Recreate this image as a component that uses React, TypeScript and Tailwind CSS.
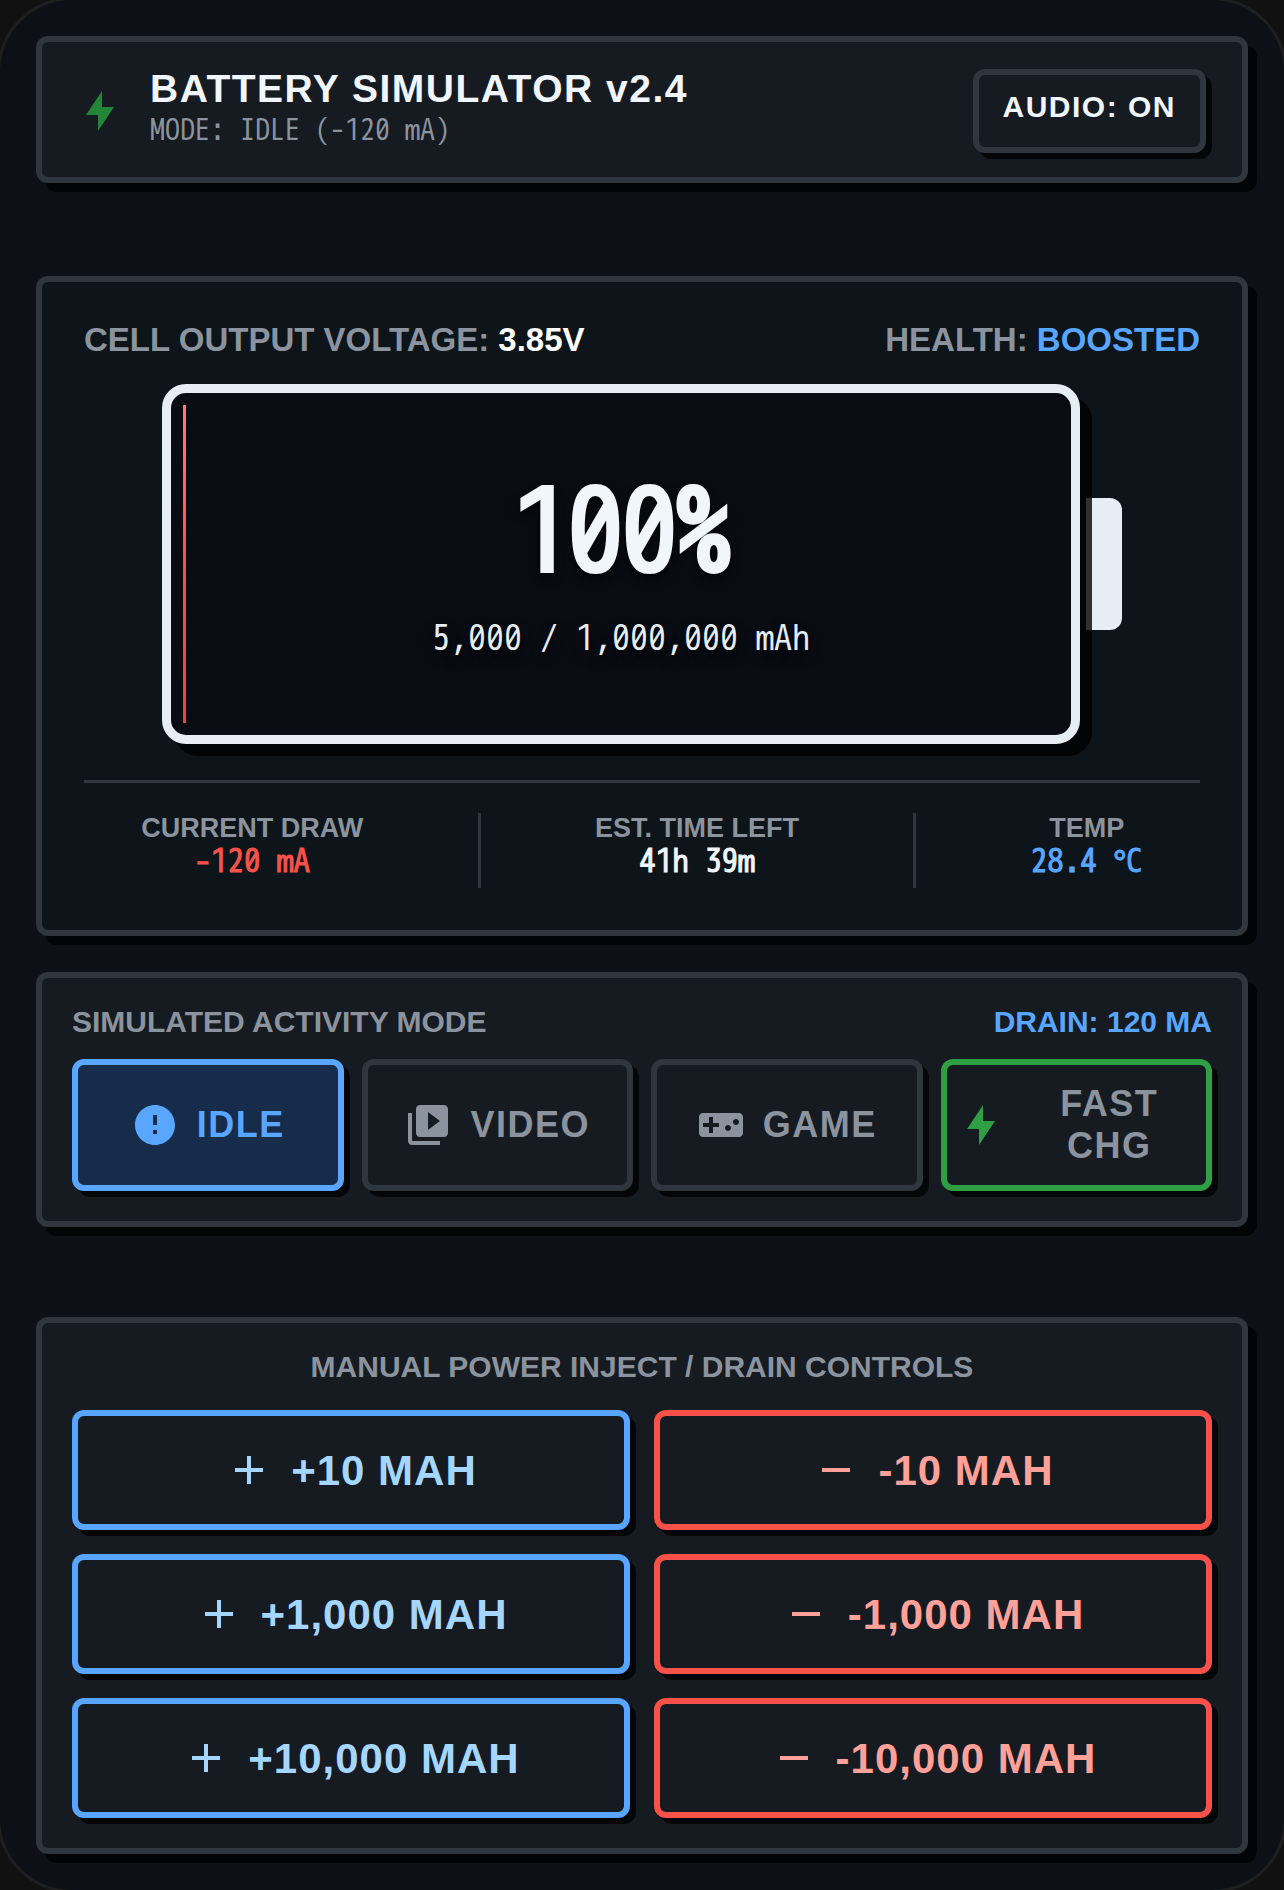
import { useState, type ReactNode } from "react";

const MONO = "font-['WenQuanYi_Zen_Hei_Mono',Inconsolata,'Liberation_Mono',monospace]";
const CARD = "rounded-xl border-6 border-[#30363d] shadow-[9px_9px_0_rgba(0,0,0,0.75)]";
const BUTTON =
  "flex cursor-pointer items-center justify-center gap-[18px] rounded-xl border-6 font-bold shadow-[6px_6px_0_rgba(0,0,0,0.75)]";

function Icon({ d, className = "" }: { d: string; className?: string }) {
  return (
    <svg viewBox="0 0 24 24" aria-hidden="true" className={`size-12 shrink-0 fill-current ${className}`}>
      <path fillRule="evenodd" d={d} />
    </svg>
  );
}

const BOLT = "M13 2v8h6l-8 12v-8H5z";
const ALERT =
  "M12 2C6.48 2 2 6.48 2 12s4.48 10 10 10 10-4.48 10-10S17.52 2 12 2zm1 14.5h-2v-2h2v2zm0-4.5h-2V7h2v5z";
const VIDEO =
  "M4 6H2v14c0 1.1.9 2 2 2h14v-2H4V6zm16-4H8c-1.1 0-2 .9-2 2v12c0 1.1.9 2 2 2h12c1.1 0 2-.9 2-2V4c0-1.1-.9-2-2-2zm-8 12.5v-9l6 4.5-6 4.5z";
const GAME =
  "M21 6H3c-1.1 0-2 .9-2 2v8c0 1.1.9 2 2 2h18c1.1 0 2-.9 2-2V8c0-1.1-.9-2-2-2zm-10 7H8v3H6v-3H3v-2h3V8h2v3h3v2zm4.5 2c-.83 0-1.5-.67-1.5-1.5s.67-1.5 1.5-1.5 1.5.67 1.5 1.5-.67 1.5-1.5 1.5zm4-3c-.83 0-1.5-.67-1.5-1.5S18.67 9 19.5 9s1.5.67 1.5 1.5-.67 1.5-1.5 1.5z";
const PLUS = "M19 13h-6v6h-2v-6H5v-2h6V5h2v6h6v2z";
const MINUS = "M19 13H5v-2h14v2z";

const modes = [
  { id: "idle", label: "IDLE", icon: ALERT },
  { id: "video", label: "VIDEO", icon: VIDEO },
  { id: "game", label: "GAME", icon: GAME },
  { id: "fast", label: "FAST CHG", icon: BOLT },
];

const amounts = ["10", "1,000", "10,000"];

function modeColors(id: string, active: boolean) {
  if (active) return "border-[#58a6ff] bg-[#172b4a] text-[#58a6ff]";
  if (id === "fast") return "border-[#2ea043] bg-[#161b22] text-[#8b949e]";
  return "border-[#30363d] bg-[#161b22] text-[#8b949e]";
}

function Stat({ label, color, children }: { label: string; color: string; children: ReactNode }) {
  return (
    <div className="flex flex-col items-center">
      <span className="text-[27px] leading-[30px] font-bold text-[#8b949e]">{label}</span>
      <span
        className={`text-[33px] leading-[39px] font-bold whitespace-pre [-webkit-text-stroke:1px_currentColor] ${MONO} ${color}`}
      >
        {children}
      </span>
    </div>
  );
}

export default function App() {
  const [audio, setAudio] = useState(true);
  const [mode, setMode] = useState("idle");

  return (
    <div className="bg-[#111111] font-['Liberation_Sans',Arial,sans-serif]">
      <main className="flex min-h-screen flex-col rounded-[72px] bg-[#0d1017] p-9 shadow-[0_0_0_3px_#1f1f1f]">
        <header className={`${CARD} flex items-center bg-[#161b22] pt-[27px] pr-9 pb-6 pl-[34px]`}>
          <Icon d={BOLT} className="text-[#238636]" />
          <div className="ml-[26px] flex flex-col gap-0.5">
            <h1 className="text-[39px] leading-[39px] font-bold tracking-[1.5px] text-[#f0f6fc]">
              BATTERY SIMULATOR v2.4
            </h1>
            <p className={`text-[30px] leading-[43px] text-[#8b949e] ${MONO}`}>MODE: IDLE (-120 mA)</p>
          </div>
          <button
            type="button"
            onClick={() => setAudio(!audio)}
            className="ml-auto cursor-pointer rounded-xl border-6 border-[#30363d] bg-[#161b22] px-6 pt-[14px] pb-[22px] text-[30px] leading-9 font-bold tracking-[1.5px] text-[#f0f6fc] shadow-[6px_6px_0_rgba(0,0,0,0.75)]"
          >
            AUDIO: {audio ? "ON" : "OFF"}
          </button>
        </header>

        <section className={`${CARD} mt-[93px] bg-[#0d141a] p-[42px]`}>
          <div className="mb-7 flex justify-between text-[33px] leading-8 font-bold text-[#8b949e]">
            <p>
              CELL OUTPUT VOLTAGE: <span className="text-white">3.85V</span>
            </p>
            <p>
              HEALTH: <span className="text-[#58a6ff]">BOOSTED</span>
            </p>
          </div>

          <div className="mx-auto flex max-w-[960px] items-center gap-1.5">
            <div className="relative z-10 flex h-[360px] flex-1 flex-col items-center justify-center rounded-3xl border-9 border-[#e6edf5] bg-[#090c13] pt-[10px] shadow-[12px_12px_0_rgba(0,0,0,0.8)]">
              <div className="absolute inset-y-3 left-3 w-[3px] bg-linear-to-b from-[#ff7b72] via-[#f85149] to-[#f04040]" />
              <p
                className={`text-[114px] leading-[120px] font-bold tracking-[-3px] text-[#f0f6fc] [-webkit-text-stroke:4px_currentColor] [text-shadow:0_6px_12px_rgba(0,0,0,0.8)] ${MONO}`}
              >
                100%
              </p>
              <p className={`mt-5 text-[36px] leading-[48px] text-[#e6edf3] [text-shadow:0_6px_12px_rgba(0,0,0,0.8)] ${MONO}`}>
                5,000 / 1,000,000 mAh
              </p>
            </div>
            <div className="h-[132px] w-9 rounded-r-xl bg-[#e6edf5]" />
          </div>

          <div className="mt-9 flex justify-around border-t-3 border-[#30363d] pt-[30px]">
            <Stat label="CURRENT DRAW" color="text-[#f85149]">-120 mA</Stat>
            <div className="h-[75px] w-[3px] bg-[#30363d]" />
            <Stat label="EST. TIME LEFT" color="text-[#f0f6fc]">41h 39m</Stat>
            <div className="h-[75px] w-[3px] bg-[#30363d]" />
            <Stat label="TEMP" color="text-[#58a6ff]">28.4 °C</Stat>
          </div>
        </section>

        <section className={`${CARD} mt-9 bg-[#161b22] p-[30px]`}>
          <div className="mb-6 flex justify-between text-[30px] leading-[27px] font-bold text-[#8b949e]">
            <h2>SIMULATED ACTIVITY MODE</h2>
            <p className="text-[#58a6ff]">DRAIN: 120 MA</p>
          </div>
          <div className="grid grid-cols-4 gap-[18px]">
            {modes.map(({ id, label, icon }) => (
              <button
                key={id}
                type="button"
                aria-pressed={mode === id}
                onClick={() => setMode(id)}
                className={`${BUTTON} h-[132px] px-[10px] text-[36px] leading-[42px] tracking-[1.5px] ${modeColors(id, mode === id)}`}
              >
                <Icon d={icon} className={id === "fast" ? "text-[#2ea043]" : ""} />
                <span>{label}</span>
              </button>
            ))}
          </div>
        </section>

        <section className={`${CARD} mt-[90px] bg-[#161b22] p-[30px]`}>
          <h2 className="mb-[30px] text-center text-[30px] leading-[27px] font-bold text-[#8b949e]">
            MANUAL POWER INJECT / DRAIN CONTROLS
          </h2>
          <div className="grid grid-cols-2 gap-6">
            {amounts.flatMap((amount) => [
              <button
                key={`+${amount}`}
                type="button"
                className={`${BUTTON} h-[120px] border-[#58a6ff] bg-[#161b22] text-[42px] tracking-[1px] text-[#a5d6ff]`}
              >
                <Icon d={PLUS} />
                <span>+{amount} MAH</span>
              </button>,
              <button
                key={`-${amount}`}
                type="button"
                className={`${BUTTON} h-[120px] border-[#f85149] bg-[#161b22] text-[42px] tracking-[1px] text-[#ffa198]`}
              >
                <Icon d={MINUS} />
                <span>-{amount} MAH</span>
              </button>,
            ])}
          </div>
        </section>
      </main>
    </div>
  );
}
